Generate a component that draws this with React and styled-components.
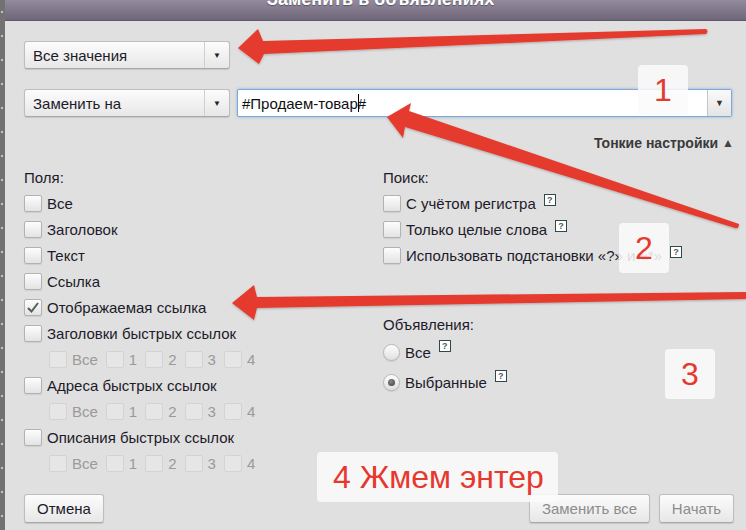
import React from "react";
import styled, { createGlobalStyle, css } from "styled-components";

const GlobalStyle = createGlobalStyle`
  html, body {
    margin: 0;
    padding: 0;
    background: #e0e0e0;
  }
  body {
    font-family: "Liberation Sans", Arial, sans-serif;
    color: #1d1b2a;
  }
`;

const Page = styled.div`
  position: relative;
  display: flex;
  width: 746px;
  height: 530px;
  overflow: hidden;
  background: #e0e0e0;
`;

const Backdrop = styled.div`
  width: 5px;
  flex-shrink: 0;
  background-color: #727272;
  background-image: radial-gradient(circle at 2px 12px, #b8c4cc 1px, transparent 1.6px);
  background-size: 5px 24px;
`;

const Dialog = styled.div`
  flex: 1;
  display: flex;
  flex-direction: column;
  min-width: 0;
`;

const TitleBar = styled.div`
  height: 20px;
  flex-shrink: 0;
  display: flex;
  justify-content: center;
  overflow: hidden;
  padding-left: 10px;
  background: linear-gradient(#938b9d, #6f6779);
  border-bottom: 1px solid #5e5768;
`;

const Title = styled.div`
  margin-top: -10px;
  font-size: 18px;
  line-height: 18px;
  font-weight: bold;
  color: #fff;
  text-shadow: 0 1px 1px rgba(0, 0, 0, 0.35);
  white-space: nowrap;
`;

const Body = styled.div`
  flex: 1;
  display: flex;
  flex-direction: column;
  padding: 20px 12px 7px 19px;
  font-size: 15px;
`;

const ControlRow = styled.div`
  display: flex;
  gap: 7px;
  height: 28px;
  margin-bottom: 20px;
`;

const buttonSurface = css`
  background: linear-gradient(#fcfcfc, #e7e7e7);
  border: 1px solid #bdbdbd;
  border-bottom-color: #a9a9a9;
  border-radius: 3px;
  box-shadow: 0 1px 1px rgba(0, 0, 0, 0.12);
  box-sizing: border-box;
`;

const Select = styled.div`
  ${buttonSurface}
  width: 206px;
  height: 28px;
  display: flex;
  align-items: center;
  flex-shrink: 0;
`;

const SelectLabel = styled.span`
  flex: 1;
  padding-left: 8px;
  color: #1d1b2a;
`;

const SelectArrow = styled.span`
  width: 24px;
  height: 100%;
  display: flex;
  align-items: center;
  justify-content: center;
  border-left: 1px solid #d0d0d0;
  font-size: 8px;
  color: #222;
`;

const InputBox = styled.div`
  flex: 1;
  display: flex;
  height: 28px;
  margin-right: 2px;
  box-sizing: border-box;
  background: #fff;
  border: 1px solid #7ea8d6;
  border-radius: 2px;
  box-shadow: 0 0 3px rgba(100, 155, 220, 0.7);
`;

const InputText = styled.div`
  flex: 1;
  display: flex;
  align-items: center;
  padding-left: 4px;
  color: #111;
`;

const Caret = styled.span`
  display: inline-block;
  width: 1px;
  height: 18px;
  margin-right: -1px;
  background: #000;
`;

const InputButton = styled.div`
  width: 23px;
  display: flex;
  align-items: center;
  justify-content: center;
  background: linear-gradient(#fafafa, #e4e4e4);
  border-left: 1px solid #c4c4c4;
  font-size: 9px;
  color: #333;
`;

const SettingsRow = styled.div`
  display: flex;
  justify-content: flex-end;
  align-items: center;
  gap: 4px;
  height: 16px;
  margin-top: -2px;
  margin-bottom: 13px;
  font-size: 14px;
  font-weight: bold;
  color: #3a3a3a;
`;

const Triangle = styled.span`
  font-size: 12px;
  color: #444;
`;

const Columns = styled.div`
  display: grid;
  grid-template-columns: 359px 1fr;
`;

const Column = styled.div`
  display: flex;
  flex-direction: column;
`;

const Heading = styled.div`
  height: 26px;
  display: flex;
  align-items: center;
  margin-top: ${(p) => p.$gap || 0}px;
`;

const Row = styled.label`
  height: ${(p) => p.$height || 26}px;
  display: flex;
  align-items: center;
  gap: 5px;
  padding-left: ${(p) => p.$indent || 0}px;
  white-space: nowrap;
  color: ${(p) => (p.$disabled ? "#9a9a9a" : "#1d1b2a")};
`;

const Box = styled.span`
  width: 18px;
  height: 17px;
  flex-shrink: 0;
  box-sizing: border-box;
  border-radius: 2px;
  display: flex;
  align-items: center;
  justify-content: center;
  ${(p) =>
    p.$disabled
      ? css`
          background: #e6e6e6;
          border: 1px solid #d3d3d3;
        `
      : css`
          background: linear-gradient(#fdfdfd, #e3e3e3);
          border: 1px solid #b2b2b2;
          box-shadow: 0 1px 1px rgba(0, 0, 0, 0.08);
        `}
`;

const SubItem = styled.span`
  display: flex;
  align-items: center;
  gap: 5px;
  margin-right: 3px;
`;

const Radio = styled.span`
  width: 17px;
  height: 17px;
  flex-shrink: 0;
  box-sizing: border-box;
  border-radius: 50%;
  border: 1px solid #b7b7b7;
  background: linear-gradient(#fdfdfd, #e0e0e0);
  box-shadow: 0 1px 1px rgba(0, 0, 0, 0.1);
  display: flex;
  align-items: center;
  justify-content: center;

  &::after {
    content: "";
    display: ${(p) => (p.$checked ? "block" : "none")};
    width: 7px;
    height: 7px;
    border-radius: 50%;
    background: radial-gradient(circle at 40% 35%, #888, #3e3e3e);
  }
`;

const Help = styled.span`
  align-self: flex-start;
  margin-top: ${(p) => p.$top || 4}px;
  margin-left: 3px;
  width: 12px;
  height: 12px;
  box-sizing: border-box;
  border: 1px solid #2d4a4a;
  background: #fff;
  font-size: 9px;
  line-height: 10px;
  font-weight: bold;
  text-align: center;
  color: #555;
`;

const Footer = styled.div`
  margin-top: auto;
  display: flex;
  justify-content: space-between;
`;

const ButtonGroup = styled.div`
  display: flex;
  gap: 9px;
`;

const Button = styled.button`
  ${buttonSurface}
  height: 29px;
  width: ${(p) => p.$width}px;
  font-family: inherit;
  font-size: 15px;
  color: ${(p) => (p.$muted ? "#8c8c8c" : "#1d1b2a")};
  padding: 0;
`;

const Overlay = styled.svg`
  position: absolute;
  left: 0;
  top: 0;
  pointer-events: none;
`;

const Badge = styled.div`
  position: absolute;
  left: ${(p) => p.$x}px;
  top: ${(p) => p.$y}px;
  width: ${(p) => p.$w || 50}px;
  height: 50px;
  box-sizing: border-box;
  padding-left: ${(p) => (p.$w ? 16 : 0)}px;
  border-radius: 4px;
  background: rgba(250, 250, 250, 0.86);
  display: flex;
  align-items: center;
  justify-content: ${(p) => (p.$w ? "flex-start" : "center")};
  font-size: 32px;
  color: #e6382d;
  white-space: nowrap;
`;

const Check = () => (
  <svg width="14" height="13" viewBox="0 0 14 13">
    <path d="M2 7 L5.5 10.5 L12 2" fill="none" stroke="#5a5a5a" strokeWidth="2" />
  </svg>
);

const CheckRow = ({ label, checked }) => (
  <Row>
    <Box>{checked && <Check />}</Box>
    {label}
  </Row>
);

const SubRow = () => (
  <Row $indent={25} $disabled>
    {["Все", "1", "2", "3", "4"].map((t) => (
      <SubItem key={t}>
        <Box $disabled />
        {t}
      </SubItem>
    ))}
  </Row>
);

const fields = [
  { label: "Все" },
  { label: "Заголовок" },
  { label: "Текст" },
  { label: "Ссылка" },
  { label: "Отображаемая ссылка", checked: true },
  { label: "Заголовки быстрых ссылок", sub: true },
  { label: "Адреса быстрых ссылок", sub: true },
  { label: "Описания быстрых ссылок", sub: true },
];

const searchOptions = [
  "С учётом регистра",
  "Только целые слова",
  "Использовать подстановки «?» и «*»",
];

const Arrows = () => (
  <Overlay width="746" height="530" viewBox="0 0 746 530">
    <defs>
      <filter id="sh" x="-5%" y="-20%" width="110%" height="140%">
        <feDropShadow dx="0" dy="1" stdDeviation="1" floodColor="#000" floodOpacity="0.25" />
      </filter>
    </defs>
    <g fill="#e53b2f" filter="url(#sh)">
      <path d="M238 48 L258 29 L263 41 L706 29 Q709 31 706 34 L264 54 L259 64 Z" />
      <path d="M387 117 L411 103 L409 111 L739 224 Q739 229 735 228 L405 127 L403 138 Z" />
      <path d="M232 303 L254 285 L257 297 L746 292 L746 299 L257 308 L254 320 Z" />
    </g>
  </Overlay>
);

export default function App() {
  return (
    <>
      <GlobalStyle />
      <Page>
        <Backdrop />
        <Dialog>
          <TitleBar>
            <Title>Заменить в объявлениях</Title>
          </TitleBar>
          <Body>
            <ControlRow>
              <Select>
                <SelectLabel>Все значения</SelectLabel>
                <SelectArrow>▼</SelectArrow>
              </Select>
            </ControlRow>
            <ControlRow>
              <Select>
                <SelectLabel>Заменить на</SelectLabel>
                <SelectArrow>▼</SelectArrow>
              </Select>
              <InputBox>
                <InputText>
                  #Продаем-товар<Caret />#
                </InputText>
                <InputButton>▼</InputButton>
              </InputBox>
            </ControlRow>
            <SettingsRow>
              Тонкие настройки <Triangle>▲</Triangle>
            </SettingsRow>
            <Columns>
              <Column>
                <Heading>Поля:</Heading>
                {fields.map((f) => (
                  <React.Fragment key={f.label}>
                    <CheckRow label={f.label} checked={f.checked} />
                    {f.sub && <SubRow />}
                  </React.Fragment>
                ))}
              </Column>
              <Column>
                <Heading>Поиск:</Heading>
                {searchOptions.map((o) => (
                  <Row key={o}>
                    <Box />
                    {o}
                    <Help>?</Help>
                  </Row>
                ))}
                <Heading $gap={43}>Объявления:</Heading>
                <Row $height={30}>
                  <Radio />
                  Все
                  <Help $top={3}>?</Help>
                </Row>
                <Row $height={30}>
                  <Radio $checked />
                  Выбранные
                  <Help $top={3}>?</Help>
                </Row>
              </Column>
            </Columns>
            <Footer>
              <Button $width={80}>Отмена</Button>
              <ButtonGroup>
                <Button $width={121} $muted>
                  Заменить все
                </Button>
                <Button $width={75} $muted>
                  Начать
                </Button>
              </ButtonGroup>
            </Footer>
          </Body>
        </Dialog>
        <Arrows />
        <Badge $x={638} $y={65}>1</Badge>
        <Badge $x={619} $y={223}>2</Badge>
        <Badge $x={665} $y={349}>3</Badge>
        <Badge $x={317} $y={452} $w={241}>4 Жмем энтер</Badge>
      </Page>
    </>
  );
}
